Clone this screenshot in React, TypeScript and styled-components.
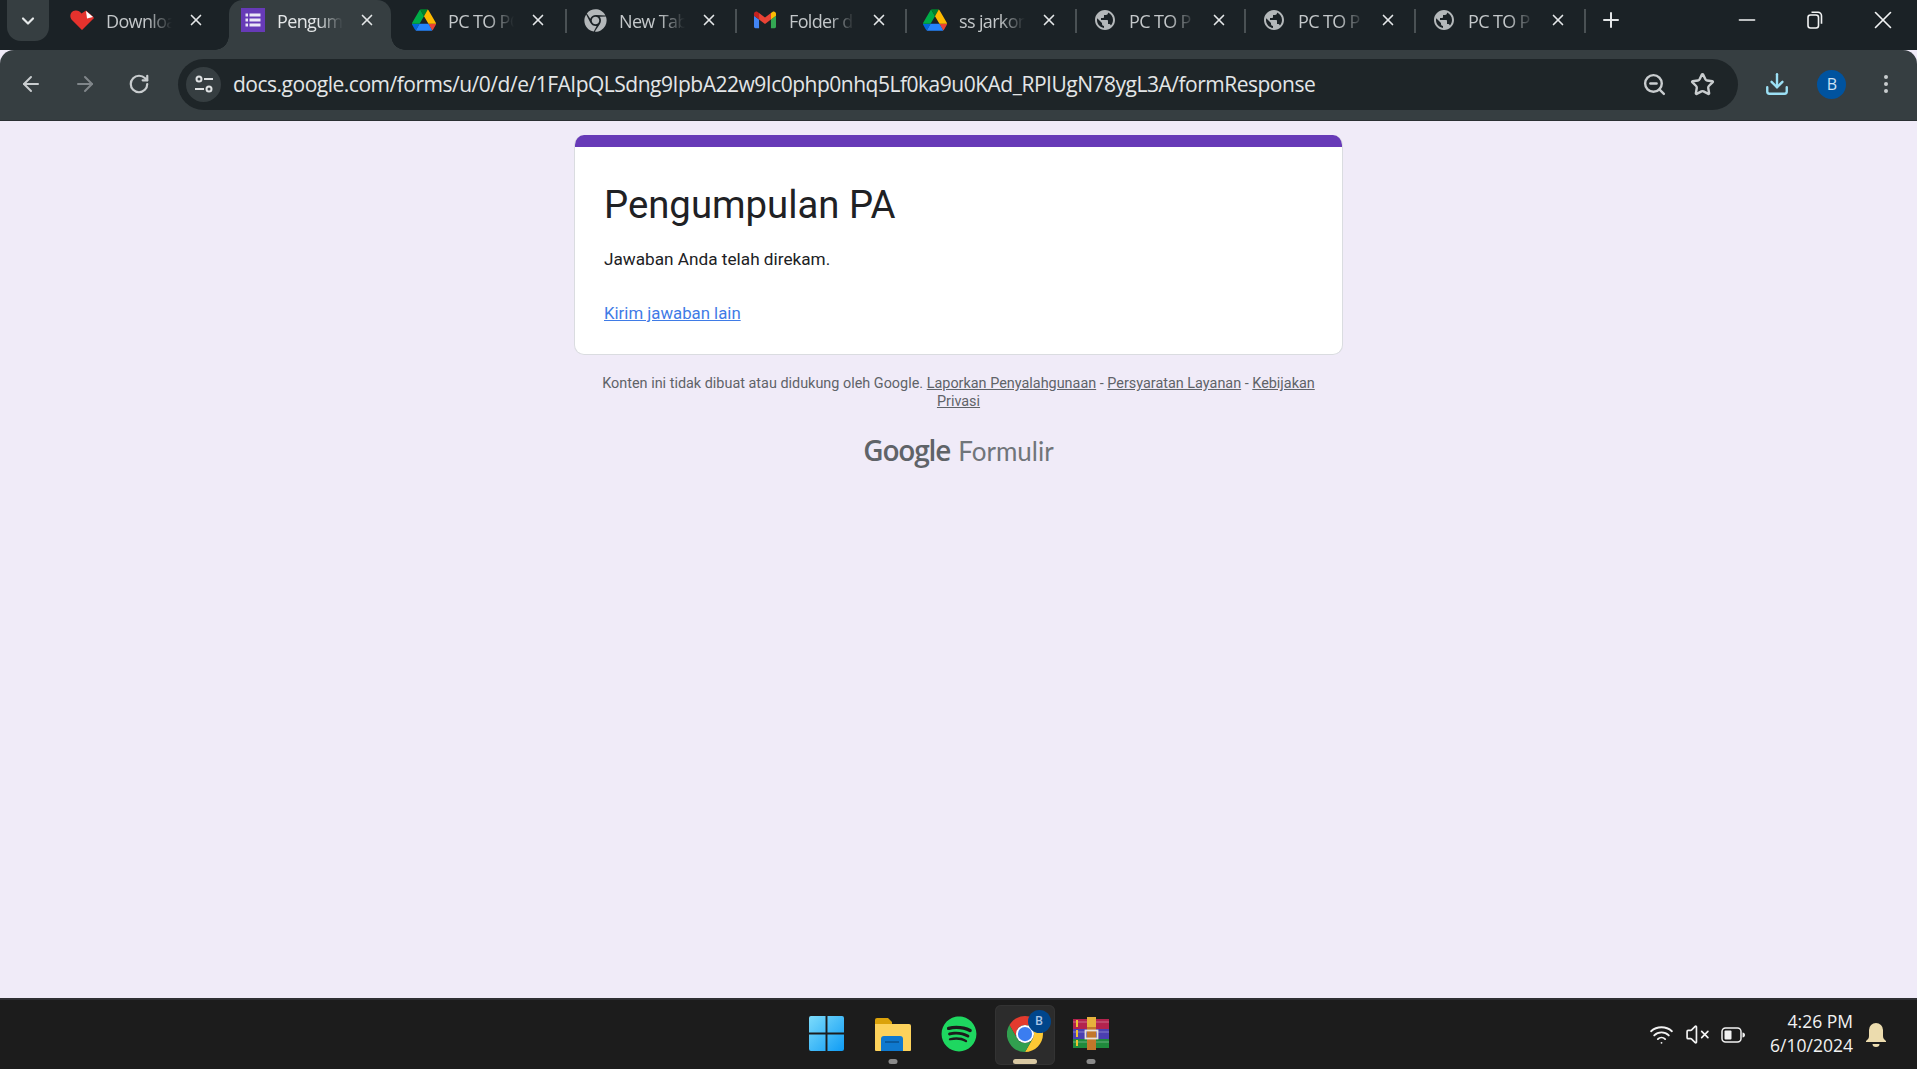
import { FC } from 'react';
import styled, { createGlobalStyle } from 'styled-components';
import {
  ArrowLeft,
  ArrowRight,
  ChevronDown,
  Download,
  Minus,
  MoreVertical,
  Plus,
  RotateCw,
  Star,
  VolumeX,
  Wifi,
  X,
  ZoomOut,
} from 'lucide-react';
import { FaChrome, FaSpotify } from 'react-icons/fa';
import { MdPublic } from 'react-icons/md';

const UI_FONT = `"Open Sans", "Noto Sans", sans-serif`;

const GlobalStyle = createGlobalStyle`
  html, body {
    margin: 0;
    height: 100%;
    background: #f0ebf8;
    overflow: hidden;
  }
  #root {
    height: 100%;
  }
`;

const Screen = styled.div`
  width: 1917px;
  height: 1069px;
  display: flex;
  flex-direction: column;
  overflow: hidden;
`;

/* ---------- browser chrome ---------- */

const TabStrip = styled.div`
  height: 50px;
  flex: none;
  display: flex;
  align-items: flex-start;
  padding-left: 7px;
  background: #1b2226;
`;

const TabListButton = styled.div`
  width: 42px;
  height: 41px;
  margin-right: 9px;
  display: flex;
  align-items: center;
  justify-content: center;
  background: #363e41;
  border-radius: 0 0 14px 14px;
  color: #e6e9ea;
`;

const Tab = styled.div<{ $active?: boolean; $sep?: boolean; $w: number }>`
  position: relative;
  width: ${(p) => p.$w}px;
  height: 50px;
  flex: none;
  box-sizing: border-box;
  padding: 8px 0 0 12px;
  display: flex;
  align-items: flex-start;
  color: ${(p) => (p.$active ? '#e4e7e8' : '#c4c8ca')};

  &::before {
    content: '';
    display: ${(p) => (p.$active ? 'block' : 'none')};
    position: absolute;
    left: 0;
    right: 9px;
    top: 0;
    bottom: 0;
    background: #363e41;
    border-radius: 14px 14px 0 0;
  }

  &::after {
    content: '';
    display: ${(p) => (p.$sep ? 'block' : 'none')};
    position: absolute;
    right: 4px;
    top: 9px;
    width: 2px;
    height: 24px;
    background: #4a5154;
  }
`;

const Flare = styled.span<{ $side: 'left' | 'right' }>`
  position: absolute;
  bottom: 0;
  width: 14px;
  height: 14px;
  ${(p) => (p.$side === 'left' ? 'left: -14px;' : 'right: -5px;')}
  background: radial-gradient(
    circle at ${(p) => (p.$side === 'left' ? '0 0' : '100% 0')},
    transparent 13.5px,
    #363e41 14px
  );
`;

const Favicon = styled.span`
  position: relative;
  width: 24px;
  height: 24px;
  flex: none;
  display: flex;
  align-items: center;
  justify-content: center;
`;

const TabTitle = styled.span`
  position: relative;
  width: 66px;
  margin-left: 12px;
  overflow: hidden;
  white-space: nowrap;
  font: 400 18px/26px ${UI_FONT};
  letter-spacing: -0.65px;
  -webkit-mask-image: linear-gradient(90deg, #000 62%, transparent 100%);
  mask-image: linear-gradient(90deg, #000 62%, transparent 100%);
`;

const TabClose = styled.span`
  position: relative;
  width: 20px;
  height: 24px;
  margin-left: 14px;
  display: flex;
  align-items: center;
  justify-content: center;
  color: #e4e7e8;
`;

const NewTab = styled.div`
  width: 24px;
  height: 40px;
  margin-left: 9px;
  display: flex;
  align-items: center;
  justify-content: center;
  color: #e4e7e8;
`;

const WindowControls = styled.div`
  margin-left: auto;
  display: flex;
`;

const WindowButton = styled.div`
  width: 68px;
  height: 39px;
  display: flex;
  align-items: center;
  justify-content: center;
  color: #f2f3f3;
`;

const Toolbar = styled.div`
  height: 71px;
  flex: none;
  display: flex;
  align-items: center;
  padding-bottom: 2px;
  box-sizing: border-box;
  background: #363e41;
  border-radius: 14px 14px 0 0;
  border-bottom: 1px solid #2a3033;
`;

const NavButton = styled.div<{ $dim?: boolean }>`
  width: 54px;
  height: 40px;
  flex: none;
  display: flex;
  align-items: center;
  justify-content: center;
  color: ${(p) => (p.$dim ? '#80868a' : '#c9cdcf')};
`;

const NavGroup = styled.div`
  display: flex;
  margin-left: 4px;
  margin-right: 12px;
`;

const Omnibox = styled.div`
  width: 1560px;
  height: 51px;
  flex: none;
  box-sizing: border-box;
  display: flex;
  align-items: center;
  padding: 0 12px 0 8px;
  background: #1e2528;
  border-radius: 26px;
`;

const TuneChip = styled.div`
  width: 35px;
  height: 35px;
  flex: none;
  border-radius: 50%;
  background: #363e41;
  display: flex;
  align-items: center;
  justify-content: center;
`;

const Url = styled.div`
  flex: 1;
  margin-left: 12px;
  white-space: nowrap;
  font: 400 21px/30px ${UI_FONT};
  letter-spacing: -0.49px;
  color: #e3e6e7;
`;

const OmniIcon = styled.div`
  width: 48px;
  height: 40px;
  flex: none;
  display: flex;
  align-items: center;
  justify-content: center;
  color: #c9cdcf;
`;

const ToolbarEnd = styled.div`
  flex: 1;
  display: flex;
  align-items: center;
  justify-content: space-around;
  padding: 0 5px 0 12px;
`;

const Avatar = styled.div`
  width: 29px;
  height: 29px;
  border-radius: 50%;
  background: #00539f;
  color: #cfe2f5;
  display: flex;
  align-items: center;
  justify-content: center;
  font: 400 16px/1 ${UI_FONT};
`;

/* ---------- form page ---------- */

const Page = styled.main`
  flex: 1;
  min-height: 0;
  background: #f0ebf8;
  display: flex;
  flex-direction: column;
  align-items: center;
  padding-top: 14px;
`;

const Card = styled.section`
  width: 769px;
  height: 220px;
  flex: none;
  box-sizing: border-box;
  background: #fff;
  border: 1px solid #dadce0;
  border-top: 0;
  border-radius: 10px;
  overflow: hidden;
  font-family: Roboto, sans-serif;
`;

const CardAccent = styled.div`
  height: 12px;
  background: #673ab7;
`;

const CardBody = styled.div`
  padding: 33px 29px 0;
`;

const Title = styled.h1`
  margin: 0;
  font: 400 38.3px/50px Roboto, sans-serif;
  color: #202124;
`;

const Message = styled.p`
  margin: 18px 0 0;
  font: 400 17.2px/22px Roboto, sans-serif;
  color: #202124;
`;

const AnotherLink = styled.a`
  display: block;
  margin-top: 32px;
  font: 400 16.8px/22px Roboto, sans-serif;
  color: #3f7be6;
  text-decoration: underline;
`;

const Disclaimer = styled.div`
  width: 730px;
  margin-top: 20px;
  text-align: center;
  font: 400 14.42px/18px Roboto, sans-serif;
  color: #5f6368;

  a {
    color: #5f6368;
    text-decoration: underline;
  }
`;

const FormsLogo = styled.div`
  margin-top: 21px;
  display: flex;
  align-items: baseline;
  gap: 8px;
  color: #5f6368;
`;

const LogoGoogle = styled.span`
  font: 600 28px/36px "Open Sans", sans-serif;
  letter-spacing: -1.2px;
`;

const LogoProduct = styled.span`
  font: 400 26px/36px Lato, sans-serif;
  color: #70757a;
`;

/* ---------- taskbar ---------- */

const Taskbar = styled.footer`
  height: 71px;
  flex: none;
  box-sizing: border-box;
  background: #1c1c1c;
  border-top: 2px solid #2f2f33;
  display: grid;
  grid-template-columns: 1fr auto 1fr;
  align-items: center;
`;

const TaskIcons = styled.div`
  display: flex;
  gap: 6px;
`;

const TaskButton = styled.div<{ $active?: boolean }>`
  position: relative;
  width: 60px;
  height: 60px;
  padding-bottom: 2px;
  box-sizing: border-box;
  display: flex;
  align-items: center;
  justify-content: center;
  border-radius: 6px;
  background: ${(p) => (p.$active ? '#2c2c2c' : 'transparent')};
  box-shadow: ${(p) => (p.$active ? 'inset 0 0 0 1px #333' : 'none')};
`;

const RunDot = styled.span<{ $active?: boolean }>`
  position: absolute;
  left: 50%;
  bottom: 1px;
  transform: translateX(-50%);
  width: ${(p) => (p.$active ? 24 : 9)}px;
  height: 5px;
  border-radius: 3px;
  background: ${(p) => (p.$active ? '#d9c9a3' : '#8a8a8a')};
`;

const ProfileBadge = styled.span`
  position: absolute;
  right: 4px;
  top: 5px;
  width: 23px;
  height: 23px;
  border-radius: 50%;
  background: #00468c;
  color: #a9c7e8;
  display: flex;
  align-items: center;
  justify-content: center;
  font: 600 12px/1 ${UI_FONT};
`;

const Tray = styled.div`
  display: flex;
  align-items: center;
  justify-content: flex-end;
  padding-right: 31px;
  color: #f2f2f2;
`;

const TrayIcon = styled.span`
  width: 36px;
  display: flex;
  align-items: center;
  justify-content: center;
`;

const Clock = styled.div`
  margin-left: 19px;
  padding-bottom: 4px;
  text-align: right;
  font: 400 17.5px/24px ${UI_FONT};
  color: #f2f2f2;
`;

const BellSlot = styled.span`
  margin-left: 13px;
  width: 20px;
  display: flex;
  justify-content: center;
`;

/* ---------- drawn icons ---------- */

const HeartIcon: FC = () => (
  <svg width="24" height="20" viewBox="0 0 24 20">
    <path d="M12 20 1.500 9.500C-1 6 .5 1 5.500.5 8 .3 10 1.500 11.500 3.500L16 .5l7.500 6.500c.5 1.500 0 2-1 2.500z" fill="#e5322d" />
    <path d="M16 1l7 6-6 1.500z" fill="#fff" />
  </svg>
);

const FormsIcon: FC = () => (
  <svg width="24" height="24" viewBox="0 0 24 24">
    <rect width="24" height="24" fill="#673ab7" />
    <g fill="#ece7f6">
      <rect x="4.500" y="5.500" width="2.500" height="3" />
      <rect x="4.500" y="10.500" width="2.500" height="3" />
      <rect x="4.500" y="15.500" width="2.500" height="3" />
      <rect x="8.500" y="5.500" width="11" height="3" />
      <rect x="8.500" y="10.500" width="11" height="3" />
      <rect x="8.500" y="15.500" width="11" height="3" />
    </g>
  </svg>
);

const DriveIcon: FC = () => (
  <svg width="24" height="22" viewBox="0 0 87.300 78">
    <path d="m6.600 66.850 3.850 6.650c.8 1.400 1.950 2.500 3.300 3.300l13.750-23.800h-27.500c0 1.550.4 3.100 1.200 4.500z" fill="#0066da" />
    <path d="m43.650 25-13.750-23.800c-1.350.8-2.500 1.900-3.300 3.300l-25.400 44a9.060 9.060 0 0 0 -1.200 4.500h27.500z" fill="#00ac47" />
    <path d="m73.550 76.800c1.350-.8 2.500-1.900 3.300-3.300l1.600-2.750 7.650-13.250c.8-1.400 1.200-2.950 1.200-4.500h-27.502l5.852 11.500z" fill="#ea4335" />
    <path d="m43.650 25 13.750-23.800c-1.350-.8-2.900-1.200-4.500-1.200h-18.500c-1.600 0-3.150.45-4.500 1.200z" fill="#00832d" />
    <path d="m59.800 53h-32.300l-13.750 23.800c1.350.8 2.900 1.200 4.500 1.200h50.800c1.600 0 3.150-.45 4.500-1.200z" fill="#2684fc" />
    <path d="m73.400 26.500-12.700-22c-.8-1.400-1.950-2.500-3.300-3.300l-13.750 23.800 16.150 28h27.450c0-1.550-.4-3.100-1.200-4.500z" fill="#ffba00" />
  </svg>
);

const GmailIcon: FC = () => (
  <svg width="22" height="18" viewBox="0 0 24 18">
    <path d="M1.600 18H5.500V8.500L0 4.400V16.400C0 17.300.7 18 1.600 18Z" fill="#4285f4" />
    <path d="M18.500 18h3.900c.9 0 1.600-.7 1.600-1.600V4.400l-5.500 4.100z" fill="#34a853" />
    <path d="M18.500 1.400v7.100L24 4.400V2.200c0-2-2.300-3.200-3.900-2z" fill="#fbbc04" />
    <path d="M5.500 8.500V1.400L12 6.300l6.500-4.900v7.100L12 13.400z" fill="#ea4335" />
    <path d="M0 2.200v2.200l5.500 4.100V1.400L3.900.2C2.300-1 0 .2 0 2.200Z" fill="#c5221f" />
  </svg>
);

const TuneIcon: FC = () => (
  <svg width="20" height="20" viewBox="0 0 20 20" fill="none" stroke="#dfe2e3" strokeWidth="2">
    <circle cx="5" cy="5" r="2.500" />
    <path d="M10 5h9M1 15h9" />
    <circle cx="15" cy="15" r="2.500" />
  </svg>
);

const RestoreIcon: FC = () => (
  <svg width="16" height="18" viewBox="0 0 16 18" fill="none" stroke="currentColor" strokeWidth="1.600">
    <rect x="1" y="4" width="10.500" height="13" rx="2.500" />
    <path d="M4.500 1.200h6.500a3.500 3.500 0 0 1 3.500 3.500v8" />
  </svg>
);

const WindowsLogo: FC = () => (
  <svg width="35" height="35" viewBox="0 0 36 36">
    <defs>
      <linearGradient id="win" x1="0" y1="0" x2="1" y2="1">
        <stop offset="0" stopColor="#7ddcfb" />
        <stop offset="1" stopColor="#0f9cf5" />
      </linearGradient>
    </defs>
    <path d="M2 0h15v17H0V2a2 2 0 0 1 2-2zM19 0h15a2 2 0 0 1 2 2v15H19zM0 19h17v17H2a2 2 0 0 1-2-2zM19 19h17v15a2 2 0 0 1-2 2H19z" fill="url(#win)" />
  </svg>
);

const FolderIcon: FC = () => (
  <svg width="36" height="34" viewBox="0 0 36 34">
    <path d="M0 3a2 2 0 0 1 2-2h11l4 4v6H0z" fill="#dba20a" />
    <path d="M0 7h34a2 2 0 0 1 2 2v24a1 1 0 0 1-1 1H1a1 1 0 0 1-1-1z" fill="#fdd25b" />
    <path d="M6 22a3 3 0 0 1 3-3h16a3 3 0 0 1 3 3v12H6z" fill="#0f79cf" />
    <rect x="10" y="24" width="14" height="2" fill="#0a5b9f" />
  </svg>
);

const ChromeLogo: FC = () => (
  <svg width="36" height="36" viewBox="0 0 48 48">
    <path d="M24 0C15.100 0 7.400 4.800 3.200 12l10.400 18A12 12 0 0 1 24 12h20.800C40.600 4.800 32.900 0 24 0z" fill="#e33b2e" />
    <path d="M44.800 12H24a12 12 0 0 1 10.400 18L24 48C37.300 48 48 37.300 48 24c0-4.400-1.200-8.500-3.200-12z" fill="#fcc934" />
    <path d="M3.200 12A24 24 0 0 0 24 48l10.400-18a12 12 0 0 1-20.800 0z" fill="#319f4f" />
    <circle cx="24" cy="24" r="12" fill="#fff" />
    <circle cx="24" cy="24" r="9.500" fill="#3b7df0" />
  </svg>
);

const WinRarIcon: FC = () => (
  <svg width="36" height="33" viewBox="0 0 36 33">
    <rect y="2" width="36" height="10" fill="#b3234e" />
    <rect y="12" width="36" height="10" fill="#4b3fb0" />
    <rect y="22" width="36" height="9" fill="#1f8a3c" />
    <path d="M0 5h36M0 15h36M0 25h36" stroke="#ffffff" strokeOpacity=".22" strokeWidth="1.500" />
    <rect x="3" y="3" width="2" height="7" fill="#f2c230" />
    <rect x="3" y="13" width="2" height="7" fill="#f2c230" />
    <rect x="3" y="23" width="2" height="6" fill="#f2c230" />
    <rect x="14" y="0" width="9" height="33" fill="#c2772a" />
    <rect x="14" y="0" width="9" height="10" fill="#e6b23c" />
    <rect x="12.500" y="13.500" width="12" height="8" fill="none" stroke="#e8e2d8" strokeWidth="1.800" />
  </svg>
);

const BatteryIcon: FC = () => (
  <svg width="24" height="16" viewBox="0 0 24 16" fill="none">
    <rect x="1" y="1" width="19" height="14" rx="3.500" stroke="#f2f2f2" strokeWidth="1.500" />
    <rect x="3.500" y="3.500" width="7" height="9" rx="1" fill="#f2f2f2" />
    <path d="M21.500 5.500c1.500 0 2.500 1 2.500 2.500s-1 2.500-2.500 2.500z" fill="#f2f2f2" />
  </svg>
);

const BellIcon: FC = () => (
  <svg width="20" height="24" viewBox="0 0 20 24">
    <path d="M10 0a7 7 0 0 0-7 7v6c0 2-1 3.500-3 5v1h20v-1c-2-1.500-3-3-3-5V7a7 7 0 0 0-7-7z" fill="#ecdcae" />
    <path d="M6.500 21h7a3.500 3 0 0 1-7 0z" fill="#ecdcae" />
  </svg>
);

/* ---------- data ---------- */

type TabItem = { title: string; icon: JSX.Element; w: number; active?: boolean; sep?: boolean };

const globe = <MdPublic size={28} color="#b4b8ba" />;

const tabs: TabItem[] = [
  { title: 'Download', icon: <HeartIcon />, w: 171 },
  { title: 'Pengumpulan', icon: <FormsIcon />, w: 171, active: true },
  { title: 'PC TO PC', icon: <DriveIcon />, w: 171, sep: true },
  { title: 'New Tab', icon: <FaChrome size={23} color="#b4b8ba" />, w: 170, sep: true },
  { title: 'Folder d', icon: <GmailIcon />, w: 170, sep: true },
  { title: 'ss jarkom', icon: <DriveIcon />, w: 170, sep: true },
  { title: 'PC TO P', icon: globe, w: 169, sep: true },
  { title: 'PC TO P', icon: globe, w: 170, sep: true },
  { title: 'PC TO P', icon: globe, w: 170, sep: true },
];

const App: FC = () => (
  <Screen>
    <GlobalStyle />
    <TabStrip>
      <TabListButton>
        <ChevronDown size={20} strokeWidth={2.6} />
      </TabListButton>
      {tabs.map((tab, i) => (
        <Tab key={i} $w={tab.w} $active={tab.active} $sep={tab.sep}>
          {tab.active && <Flare $side="left" />}
          {tab.active && <Flare $side="right" />}
          <Favicon>{tab.icon}</Favicon>
          <TabTitle>{tab.title}</TabTitle>
          <TabClose>
            <X size={18} strokeWidth={2.2} />
          </TabClose>
        </Tab>
      ))}
      <NewTab>
        <Plus size={26} strokeWidth={2} />
      </NewTab>
      <WindowControls>
        <WindowButton>
          <Minus size={26} strokeWidth={1.5} />
        </WindowButton>
        <WindowButton>
          <RestoreIcon />
        </WindowButton>
        <WindowButton>
          <X size={30} strokeWidth={1.3} />
        </WindowButton>
      </WindowControls>
    </TabStrip>

    <Toolbar>
      <NavGroup>
        <NavButton>
          <ArrowLeft size={24} />
        </NavButton>
        <NavButton $dim>
          <ArrowRight size={24} />
        </NavButton>
        <NavButton>
          <RotateCw size={22} strokeWidth={2.4} />
        </NavButton>
      </NavGroup>
      <Omnibox>
        <TuneChip>
          <TuneIcon />
        </TuneChip>
        <Url>docs.google.com/forms/u/0/d/e/1FAIpQLSdng9IpbA22w9Ic0php0nhq5Lf0ka9u0KAd_RPIUgN78ygL3A/formResponse</Url>
        <OmniIcon>
          <ZoomOut size={25} strokeWidth={2.3} />
        </OmniIcon>
        <OmniIcon>
          <Star size={25} strokeWidth={2.3} />
        </OmniIcon>
      </Omnibox>
      <ToolbarEnd>
        <Download size={26} color="#9ce0f5" strokeWidth={2.2} />
        <Avatar>B</Avatar>
        <MoreVertical size={24} color="#c9cdcf" />
      </ToolbarEnd>
    </Toolbar>

    <Page>
      <Card>
        <CardAccent />
        <CardBody>
          <Title>Pengumpulan PA</Title>
          <Message>Jawaban Anda telah direkam.</Message>
          <AnotherLink href="#">Kirim jawaban lain</AnotherLink>
        </CardBody>
      </Card>
      <Disclaimer>
        Konten ini tidak dibuat atau didukung oleh Google. <a href="#">Laporkan Penyalahgunaan</a> -{' '}
        <a href="#">Persyaratan Layanan</a> - <a href="#">Kebijakan Privasi</a>
      </Disclaimer>
      <FormsLogo>
        <LogoGoogle>Google</LogoGoogle>
        <LogoProduct>Formulir</LogoProduct>
      </FormsLogo>
    </Page>

    <Taskbar>
      <span />
      <TaskIcons>
        <TaskButton>
          <WindowsLogo />
        </TaskButton>
        <TaskButton>
          <FolderIcon />
          <RunDot />
        </TaskButton>
        <TaskButton>
          <FaSpotify size={36} color="#1ed760" />
        </TaskButton>
        <TaskButton $active>
          <ChromeLogo />
          <ProfileBadge>B</ProfileBadge>
          <RunDot $active />
        </TaskButton>
        <TaskButton>
          <WinRarIcon />
          <RunDot />
        </TaskButton>
      </TaskIcons>
      <Tray>
        <TrayIcon>
          <Wifi size={25} strokeWidth={1.8} />
        </TrayIcon>
        <TrayIcon>
          <VolumeX size={25} strokeWidth={1.6} />
        </TrayIcon>
        <TrayIcon>
          <BatteryIcon />
        </TrayIcon>
        <Clock>
          4:26 PM
          <br />
          6/10/2024
        </Clock>
        <BellSlot>
          <BellIcon />
        </BellSlot>
      </Tray>
    </Taskbar>
  </Screen>
);

export default App;
